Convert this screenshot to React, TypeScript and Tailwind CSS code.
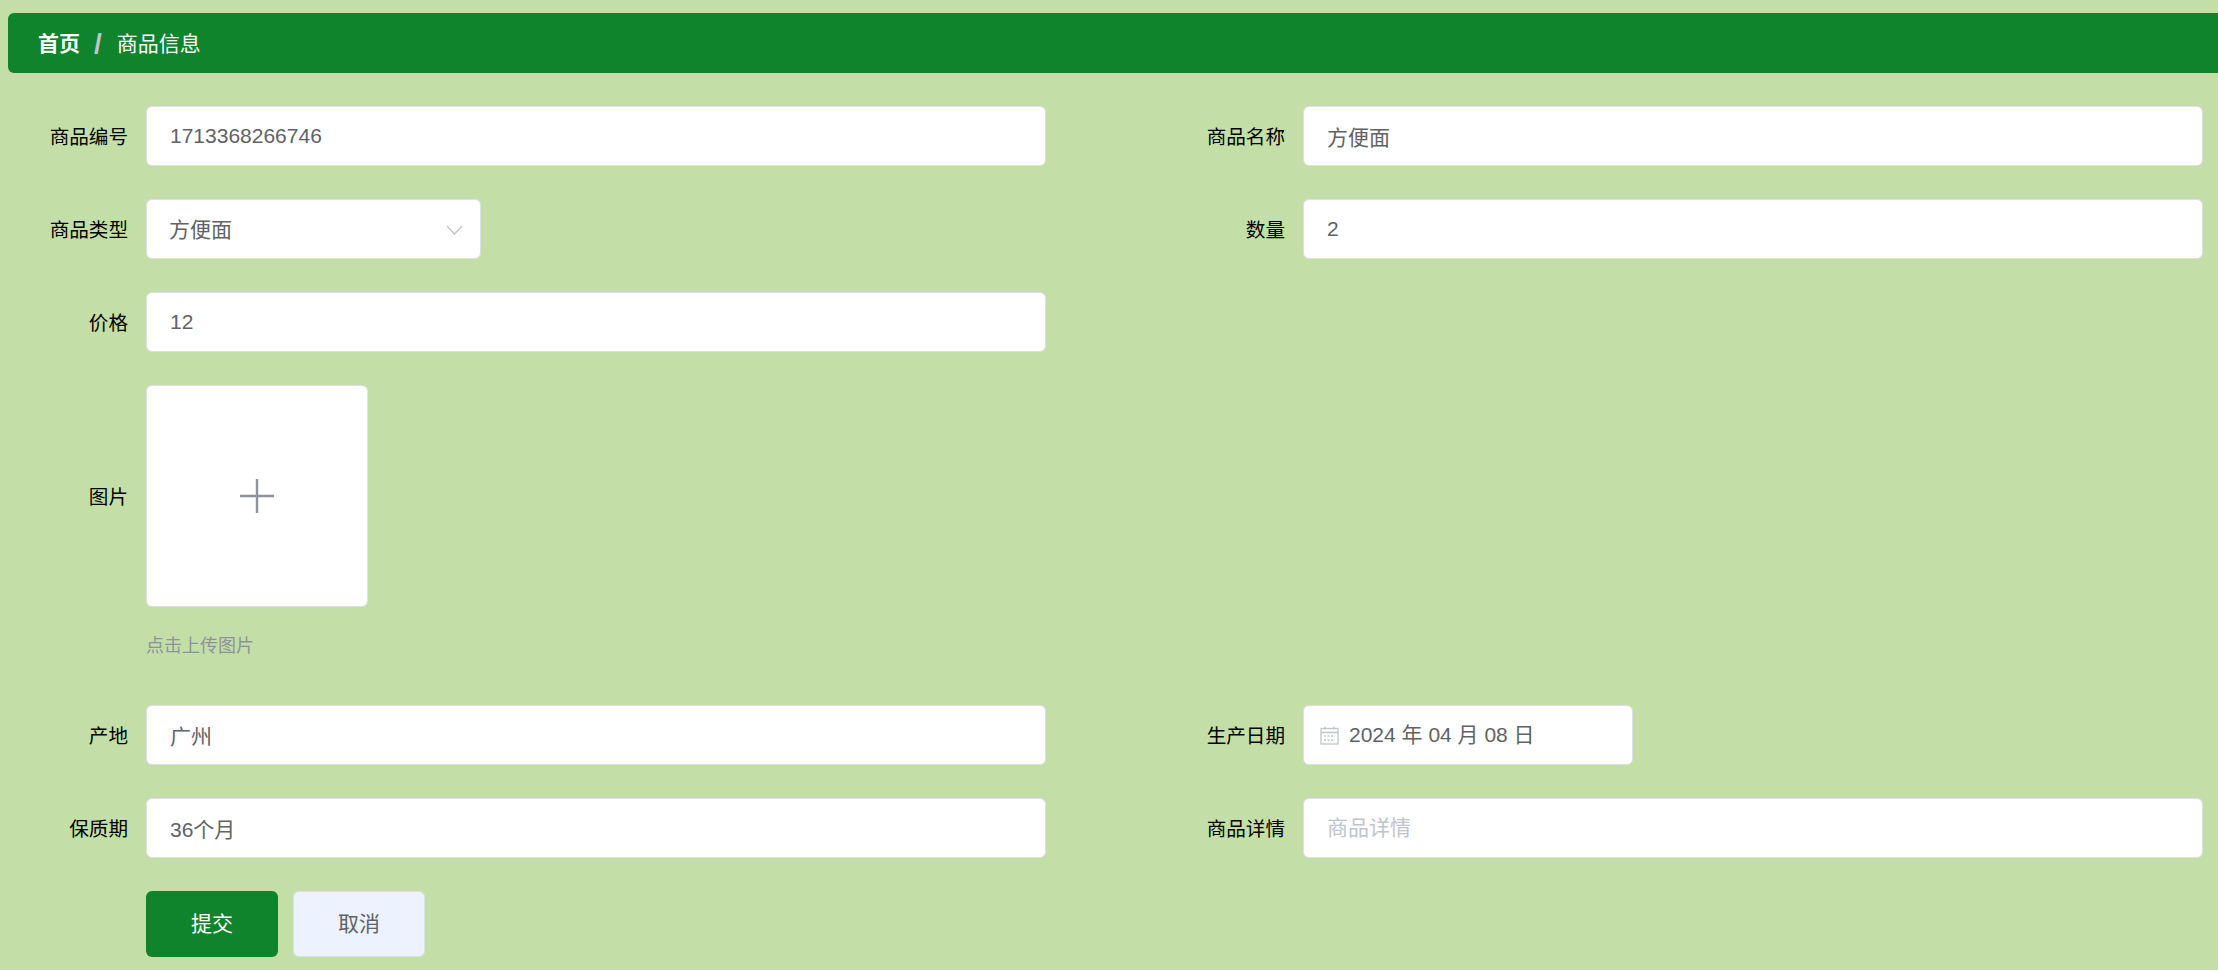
import React from "react";

const fontStack = "font-['Liberation_Sans','Noto_Sans_CJK_SC',sans-serif]";

const Label = ({ text }: { text: string }) => (
    <label className="w-[102px] mr-[18px] pt-[2px] shrink-0 text-right text-[19.6px] leading-[28px] text-black">{text}</label>
);

const TextInput = ({ value, placeholder }: { value?: string; placeholder?: string }) => (
    <input
        readOnly
        value={value}
        placeholder={placeholder}
        className="w-full h-[60px] px-[23px] bg-white border border-[#dcdfe6] rounded-[6px] text-[21px] text-[#606266] placeholder:text-[#c0c4cc] outline-none"
    />
);

const Field = ({ label, children }: { label: string; children: React.ReactNode }) => (
    <div className="flex items-center">
        <Label text={label} />
        <div className="flex-1">{children}</div>
    </div>
);

const SelectBox = () => (
    <div className="w-[335px] h-[60px] pl-[22px] pr-[17px] flex items-center justify-between bg-white border border-[#dcdfe6] rounded-[6px] text-[21px] text-[#606266]">
        <span className="pt-[2px]">方便面</span>
        <svg width="17" height="10" viewBox="0 0 17 10" fill="none" stroke="#c0c4cc" strokeWidth="1.4" className="mt-[2px]">
            <path d="M1 1l7.5 8L16 1" />
        </svg>
    </div>
);

const DateBox = () => (
    <div className="w-[330px] h-[60px] pl-[16px] flex items-center bg-white border border-[#dcdfe6] rounded-[6px] text-[21px] text-[#606266]">
        <svg width="19" height="19" viewBox="0 0 19 19" fill="none" stroke="#c0c4cc" strokeWidth="1.3" className="mr-[10px]">
            <rect x="1" y="2.5" width="17" height="15.5" />
            <path d="M1 6.5h17M5 0.5v3M14 0.5v3" />
            <path d="M4 10h11M4 14h11" strokeDasharray="2 1.5" />
        </svg>
        <span>2024 年 04 月 08 日</span>
    </div>
);

const App: React.FC = () => {
    return (
        <div className={`w-full h-[970px] overflow-hidden bg-[#c3dfa7] pt-[13px] ${fontStack}`}>
            <div className="ml-2 h-[60px] pl-[30px] pt-[2px] flex items-center bg-[#10842c] rounded-l-[6px] text-[21px] text-white">
                <span className="font-bold">首页</span>
                <span className="ml-[14px] mr-[15px] text-[28px] leading-none font-bold text-[#c0c4cc]">/</span>
                <span>商品信息</span>
            </div>

            <div className="mt-[33px] ml-[26px] w-[2177px] grid grid-cols-[1020px_1020px] gap-x-[137px] gap-y-[33px]">
                <Field label="商品编号"><TextInput value="1713368266746" /></Field>
                <Field label="商品名称"><TextInput value="方便面" /></Field>
                <Field label="商品类型"><SelectBox /></Field>
                <Field label="数量"><TextInput value="2" /></Field>
                <Field label="价格"><TextInput value="12" /></Field>
                <div />

                <div className="col-span-2">
                    <Field label="图片">
                        <div className="w-[222px] h-[222px] flex items-center justify-center bg-white border border-[#dcdfe6] rounded-[6px]">
                            <svg width="34" height="34" viewBox="0 0 34 34" stroke="#8c939d" strokeWidth="2.4">
                                <path d="M0 17h34M17 0v34" />
                            </svg>
                        </div>
                    </Field>
                    <div className="ml-[120px] mt-[22px] mb-[9px] text-[18px] leading-[34px] text-[#8c939d]">点击上传图片</div>
                </div>

                <Field label="产地"><TextInput value="广州" /></Field>
                <Field label="生产日期"><DateBox /></Field>
                <Field label="保质期"><TextInput value="36个月" /></Field>
                <Field label="商品详情"><TextInput placeholder="商品详情" /></Field>
            </div>

            <div className="mt-[33px] ml-[146px] flex gap-[15px]">
                <button className="w-[132px] h-[66px] bg-[#10842c] rounded-[6px] text-[21px] text-white">提交</button>
                <button className="w-[132px] h-[66px] bg-[#ecf2fe] border border-[#dcdfe6] rounded-[6px] text-[21px] text-[#606266]">取消</button>
            </div>
        </div>
    );
};

export default App;
